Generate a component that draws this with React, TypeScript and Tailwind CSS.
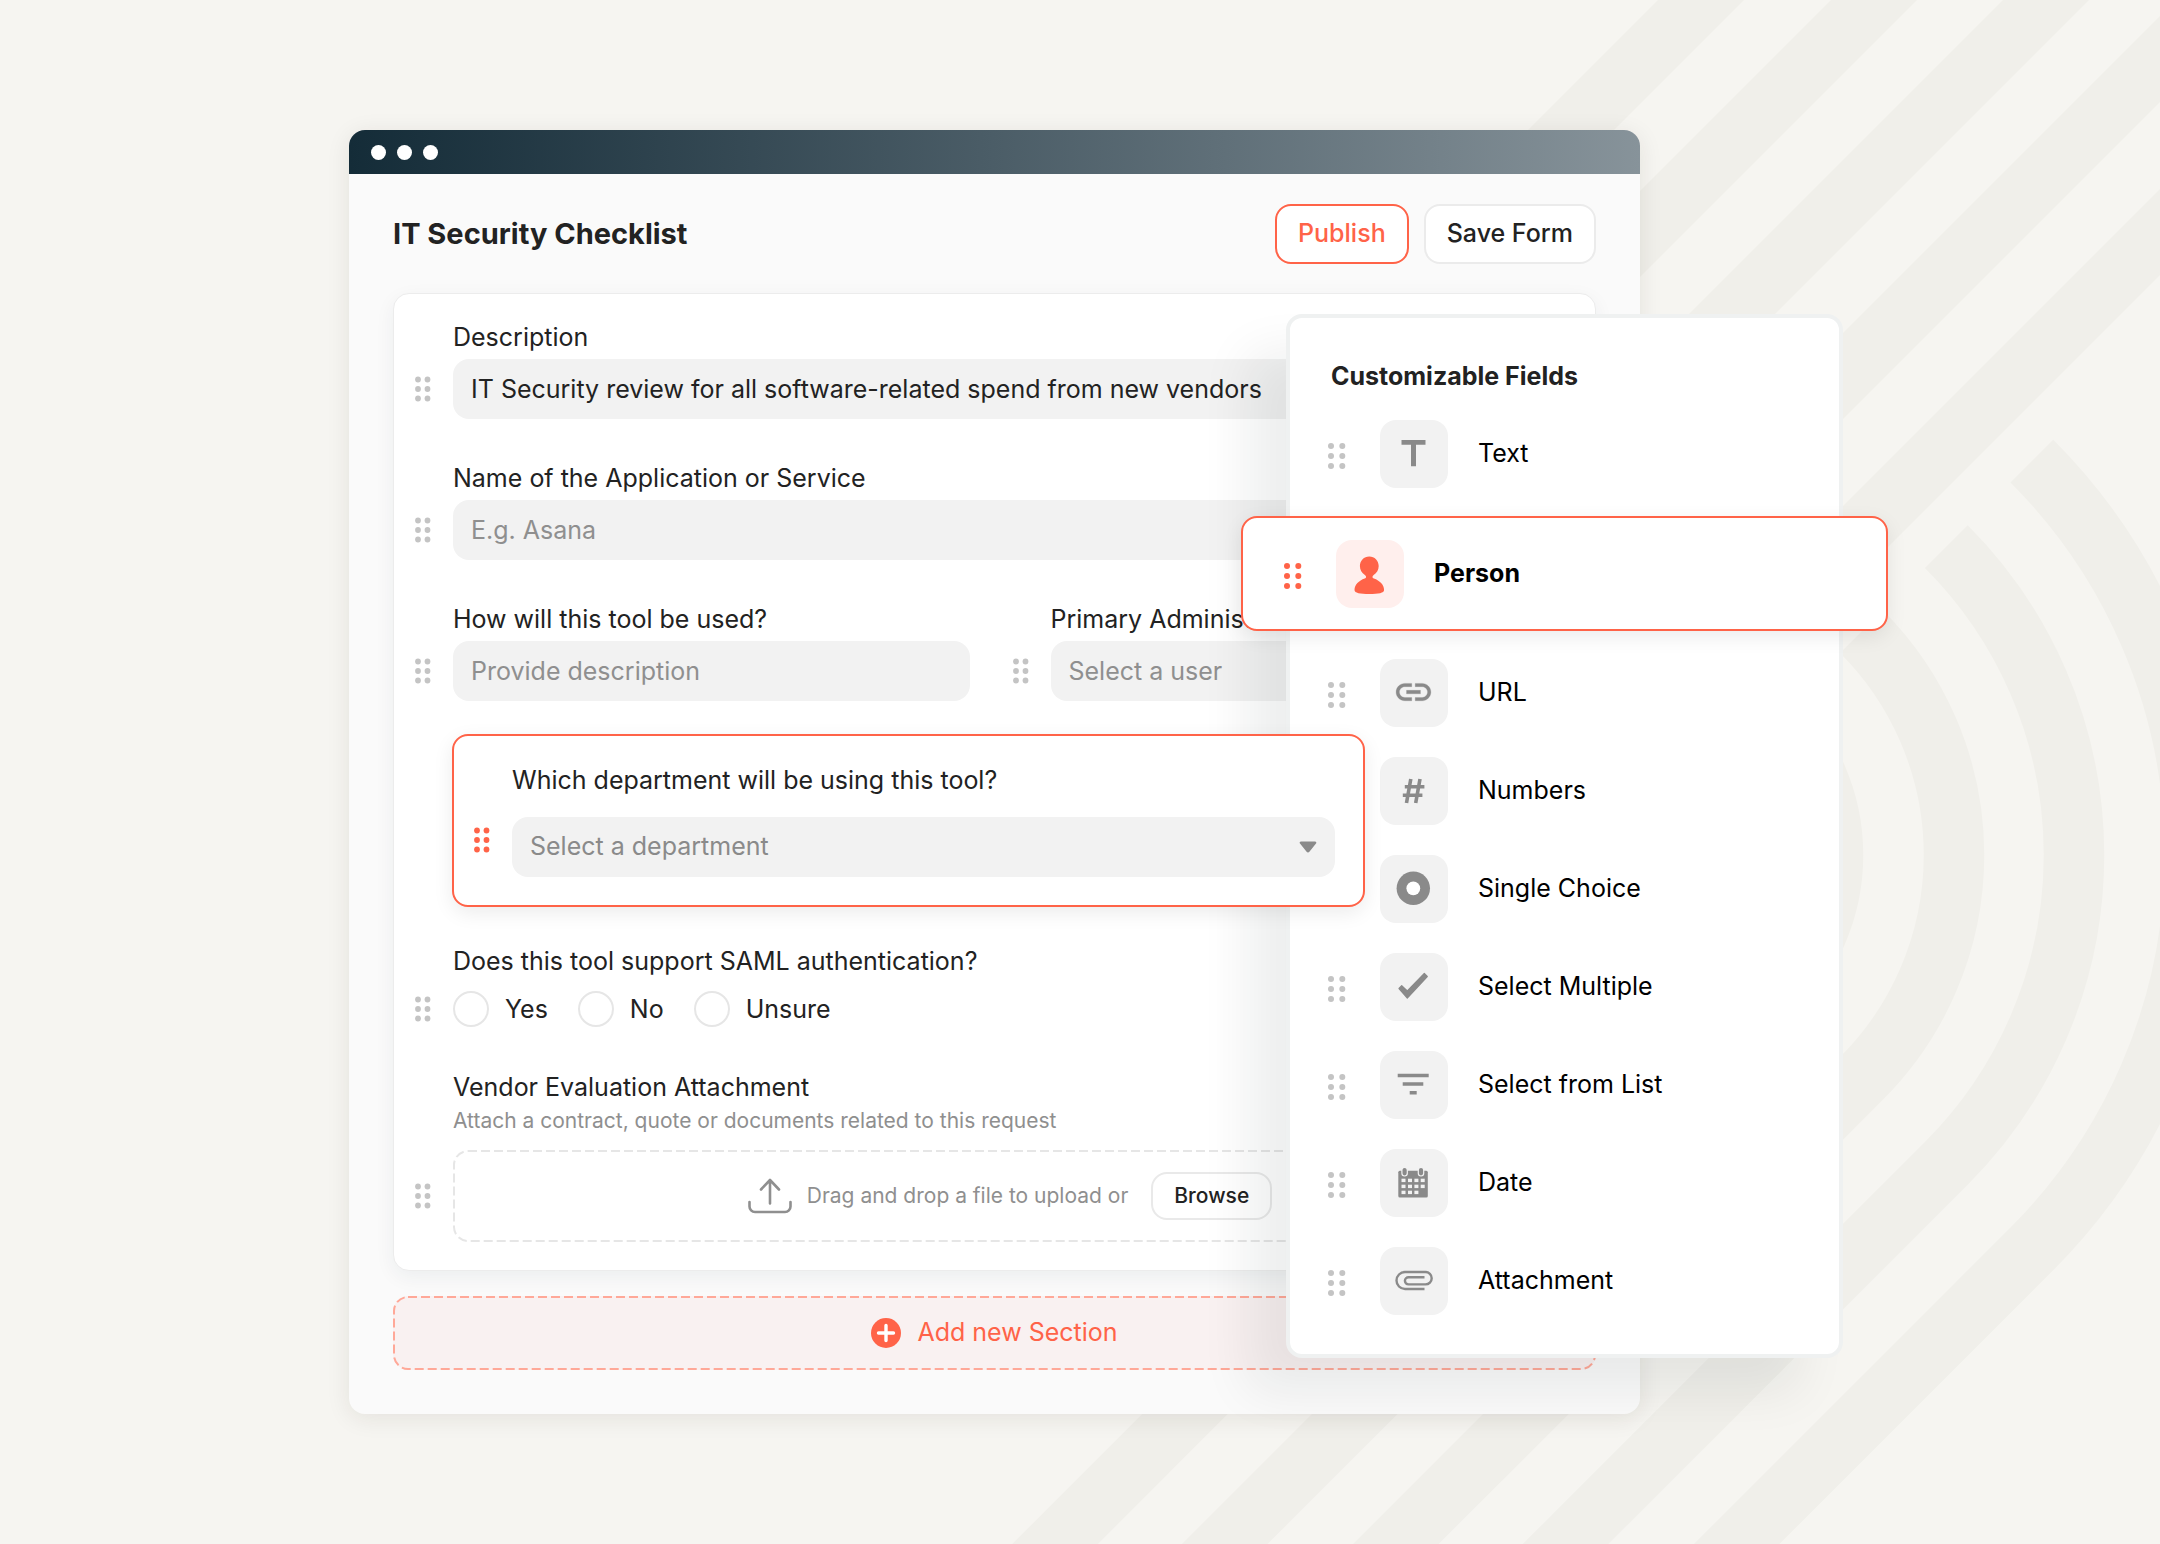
import type { ReactNode } from "react";

const CORAL = "#ff6348";

function Backdrop() {
  const diagonals = [1658, 1831, 2003, 2176, 2349];
  const rings = [75, 195, 316, 436, 557];
  const cx = 1638;
  const cy = 855;
  return (
    <svg
      aria-hidden="true"
      viewBox="0 0 2160 1544"
      preserveAspectRatio="xMaxYMin slice"
      className="absolute inset-0 h-full w-full"
    >
      {diagonals.map((s) => (
        <path key={s} fill="#f0efea" d={`M${s} 0H${s + 86}L1300 ${s + 86 - 1300}V${s - 1300}Z`} />
      ))}
      {rings.map((r) => {
        const d = r * Math.SQRT1_2;
        return (
          <path
            key={r}
            fill="none"
            stroke="#f0efea"
            strokeWidth="60.500"
            d={`M${cx + d} ${cy - d}A${r} ${r} 0 0 1 ${cx + d} ${cy + d}l-900 900`}
          />
        );
      })}
    </svg>
  );
}

function FormHandle({ active = false }: { active?: boolean }) {
  return (
    <svg aria-hidden="true" width="16" height="26" viewBox="0 0 16 26" fill={active ? CORAL : "#c4c4c4"} className="shrink-0">
      {[3.5, 13, 22.5].map((y) => (
        <g key={y}>
          <circle cx="3" cy={y} r="2.9" />
          <circle cx="12.5" cy={y} r="2.9" />
        </g>
      ))}
    </svg>
  );
}

function PanelHandle({ active = false }: { active?: boolean }) {
  return (
    <svg aria-hidden="true" width="18" height="30" viewBox="0 0 18 30" fill={active ? CORAL : "#c4c4c4"} className="shrink-0">
      {[7, 17, 27].map((y) => (
        <g key={y}>
          <circle cx="3" cy={y} r="3" />
          <circle cx="14.3" cy={y} r="3" />
        </g>
      ))}
    </svg>
  );
}

function DashedFrame({ color }: { color: string }) {
  return (
    <svg aria-hidden="true" className="pointer-events-none absolute inset-px h-[calc(100%-2px)] w-[calc(100%-2px)] overflow-visible">
      <rect width="100%" height="100%" rx="14" fill="none" stroke={color} strokeWidth="2" strokeDasharray="9 4" />
    </svg>
  );
}

function Caret() {
  return (
    <svg
      aria-hidden="true"
      width="18"
      height="12"
      viewBox="0 0 18 12"
      className="pointer-events-none absolute top-1/2 right-[18px] -translate-y-1/2"
    >
      <path d="M2 .5h14c1.2 0 1.8 1.2 1 2.1l-6.6 8.2c-.7.9-2.1.9-2.8 0L1 2.600C.2 1.700.8.500 2 .5z" fill="#8a8a8a" />
    </svg>
  );
}

const controlClass =
  "h-[60px] w-full appearance-none rounded-2xl bg-[#f2f2f2] px-[18px] text-[25px] text-[#222222] placeholder:text-[#8f8f8f] placeholder:opacity-100";

function Field({ id, label, children }: { id: string; label: string; children: ReactNode }) {
  return (
    <div className="flex min-w-0 items-end gap-[22px]">
      <div className="flex h-[60px] items-center">
        <FormHandle />
      </div>
      <div className="min-w-0 flex-1">
        <label htmlFor={id} className="mb-1 block text-[25px] leading-9 whitespace-nowrap">
          {label}
        </label>
        {children}
      </div>
    </div>
  );
}

function Tile({ active = false, children }: { active?: boolean; children: ReactNode }) {
  return (
    <svg
      aria-hidden="true"
      width="68"
      height="68"
      viewBox="0 0 68 68"
      fill={active ? CORAL : "#8a8a8a"}
      className={active ? "shrink-0 rounded-2xl bg-[#ffefed]" : "shrink-0 rounded-2xl bg-[#f2f2f2]"}
    >
      {children}
    </svg>
  );
}

const cells = [29.7, 35.7, 41.7].flatMap((y, row) =>
  [21.5, 28, 34.4, 40.7].filter((_, col) => !(row === 2 && col === 3)).map((x) => ({ x, y })),
);

const fields: { name: string; icon: ReactNode }[] = [
  {
    name: "URL",
    icon: (
      <g transform="translate(12.600 12.200) scale(1.740)">
        <path
          d="M3.900 12c0-1.710 1.390-3.100 3.100-3.100h4V7H7c-2.760 0-5 2.240-5 5s2.240 5 5 5h4v-1.900H7c-1.710 0-3.100-1.390-3.100-3.100zM8 13h8v-2H8v2zm9-6h-4v1.900h4c1.710 0 3.100 1.390 3.100 3.100s-1.390 3.100-3.100 3.100h-4V17h4c2.760 0 5-2.240 5-5s-2.240-5-5-5z"
          stroke="#8a8a8a"
          strokeWidth=".15"
        />
      </g>
    ),
  },
  {
    name: "Numbers",
    icon: <path fill="none" stroke="#8a8a8a" strokeWidth="3.600" d="M30.800 22l-4.300 24M40 22l-4.300 24M24.800 29.700h19.600M22.800 38.200h19.600" />,
  },
  {
    name: "Single Choice",
    icon: (
      <>
        <circle cx="33.300" cy="33.300" r="16.700" />
        <circle cx="33.300" cy="33.300" r="6.900" fill="#fff" />
      </>
    ),
  },
  {
    name: "Select Multiple",
    icon: (
      <path
        d="M19 35.500l2.700-2.800L27.300 38 44.300 20.500l3 3L27.300 45z"
        stroke="#8a8a8a"
        strokeWidth="1.200"
        strokeLinejoin="round"
      />
    ),
  },
  {
    name: "Select from List",
    icon: <path d="M17.700 22.700h31v3.600h-31zM22.700 31.300h20.600v3.400H22.700zM29.700 40h7v3.400h-7z" />,
  },
  {
    name: "Date",
    icon: (
      <>
        <rect x="18.300" y="21.700" width="29.500" height="26.800" rx="1.500" />
        {[24.6, 41].map((x) => (
          <rect key={x} x={x - 2.7} y="18.400" width="5.400" height="8.600" rx="2.700" stroke="#f2f2f2" strokeWidth="1.200" />
        ))}
        {cells.map(({ x, y }) => (
          <rect key={`${x}-${y}`} x={x} y={y} width="4" height="3.400" fill="#f2f2f2" />
        ))}
      </>
    ),
  },
  {
    name: "Attachment",
    icon: (
      <path
        fill="none"
        stroke="#8a8a8a"
        strokeWidth="2.400"
        d="M44.500 42H25a8.500 8.500 0 0 1 0-17h20.500a6.200 6.200 0 0 1 0 12.400H28.500a3.600 3.600 0 0 1 0-7.200h16"
      />
    ),
  },
];

function FieldItem({ name, icon }: { name: string; icon: ReactNode }) {
  return (
    <li className="mb-[30px] flex items-center px-[38px] text-[25px] text-black last:mb-0">
      <PanelHandle />
      <span className="mr-[30px] ml-[34px]">
        <Tile>{icon}</Tile>
      </span>
      {name}
    </li>
  );
}

export default function App() {
  return (
    <div className="relative min-h-screen overflow-hidden bg-[#f6f5f1] pt-[130px] pr-[272px] pb-[130px] pl-[349px] font-['Inter','Liberation_Sans',sans-serif] text-[#222222]">
      <Backdrop />
      <div className="relative">
        <main className="mr-[248px] rounded-2xl bg-[#fafafa] shadow-[0_4px_24px_rgba(40,35,20,0.09)]">
          <div className="flex h-11 items-center gap-[11px] rounded-t-2xl bg-linear-to-r from-[#142c38] to-[#87939a] pl-[22px]">
            <span className="size-[15px] rounded-full bg-white" />
            <span className="size-[15px] rounded-full bg-white" />
            <span className="size-[15px] rounded-full bg-white" />
          </div>

          <div className="px-11 pt-[30px] pb-11">
            <header className="flex items-center gap-[15px]">
              <h1 className="mr-auto text-[29px] font-bold">IT Security Checklist</h1>
              <button type="button" className="h-[60px] rounded-2xl border-2 border-[#ff6348] bg-white px-[21px] text-[25px] font-medium text-[#ff6348]">
                Publish
              </button>
              <button type="button" className="h-[60px] rounded-2xl border-2 border-[#ebebeb] bg-white px-[21px] text-[25px] font-medium">
                Save Form
              </button>
            </header>

            <form className="mt-[29px] rounded-2xl border border-[#ececec] bg-white pt-[25px] pr-7 pb-7 pl-[21px] shadow-[0_6px_20px_rgba(20,50,60,0.06)]">
              <div className="flex flex-col gap-[41px]">
                <Field id="description" label="Description">
                  <input
                    id="description"
                    type="text"
                    defaultValue="IT Security review for all software-related spend from new vendors"
                    className={controlClass}
                  />
                </Field>
                <Field id="app-name" label="Name of the Application or Service">
                  <input id="app-name" type="text" placeholder="E.g. Asana" className={controlClass} />
                </Field>
                <div className="grid grid-cols-2 gap-[43px]">
                  <Field id="usage" label="How will this tool be used?">
                    <input id="usage" type="text" placeholder="Provide description" className={controlClass} />
                  </Field>
                  <Field id="admin" label="Primary Administrator">
                    <input id="admin" type="text" placeholder="Select a user" className={controlClass} />
                  </Field>
                </div>
              </div>

              <div className="relative z-20 mt-[33px] ml-[37px] w-[913px] rounded-2xl border-2 border-[#ff6348] bg-white pt-[26px] pr-7 pb-7 pl-5 shadow-[0_6px_20px_rgba(0,0,0,0.08)]">
                <label htmlFor="department" className="ml-[38px] block text-[25px] leading-9">
                  Which department will be using this tool?
                </label>
                <div className="mt-[19px] flex items-center gap-[22px]">
                  <div className="flex h-[60px] items-start pt-[10px]">
                    <FormHandle active />
                  </div>
                  <div className="relative flex-1">
                    <select
                      id="department"
                      className="h-[60px] w-full appearance-none rounded-2xl bg-[#f2f2f2] px-[18px] text-[25px] text-[#8a8a8a]"
                    >
                      <option>Select a department</option>
                    </select>
                    <Caret />
                  </div>
                </div>
              </div>

              <fieldset className="mt-9">
                <legend className="ml-[38px] text-[25px] leading-9">Does this tool support SAML authentication?</legend>
                <div className="mt-3 flex items-center">
                  <FormHandle />
                  <div className="ml-[22px] flex gap-[30px] text-[25px] leading-9">
                    {["Yes", "No", "Unsure"].map((answer) => (
                      <label key={answer} className="flex items-center gap-4">
                        <input
                          type="radio"
                          name="saml"
                          className="size-9 appearance-none rounded-full border-2 border-[#e6e6e6] bg-white"
                        />
                        {answer}
                      </label>
                    ))}
                  </div>
                </div>
              </fieldset>

              <div className="mt-[42px] ml-[38px]">
                <h2 className="text-[25px] leading-9">Vendor Evaluation Attachment</h2>
                <p className="mt-0.5 text-[21px] leading-7 text-[#8f8f8f]">
                  Attach a contract, quote or documents related to this request
                </p>
              </div>
              <div className="mt-[15px] flex items-center gap-[22px]">
                <FormHandle />
                <div className="relative flex h-[92px] flex-1 items-center justify-center">
                  <DashedFrame color="#e6e6e6" />
                  <svg
                    aria-hidden="true"
                    width="44"
                    height="36"
                    viewBox="0 0 44 36"
                    fill="none"
                    stroke="#8f8f8f"
                    strokeWidth="2.600"
                    strokeLinecap="round"
                    strokeLinejoin="round"
                  >
                    <path d="M1.500 24v4.500a5.500 5.500 0 0 0 5.500 5.500h30a5.500 5.500 0 0 0 5.500-5.500V24M22 25.500V2M13 11.500L22 2l9 9.500" />
                  </svg>
                  <span className="mr-[23px] ml-[15px] text-[21px] text-[#8f8f8f]">Drag and drop a file to upload or</span>
                  <button type="button" className="h-12 rounded-2xl border-2 border-[#e9e9e9] bg-white px-[21px] text-[21px] font-medium">
                    Browse
                  </button>
                </div>
              </div>
            </form>

            <button
              type="button"
              className="relative mt-[25px] flex h-[74px] w-full items-center justify-center gap-4 rounded-2xl bg-[#f9f1f1] text-[25px] text-[#ff6348]"
            >
              <DashedFrame color="#ffa898" />
              <svg aria-hidden="true" width="30" height="30" viewBox="0 0 30 30">
                <circle cx="15" cy="15" r="15" fill={CORAL} />
                <path d="M15 7.500v15M7.500 15h15" stroke="#fff" strokeWidth="3.400" strokeLinecap="round" />
              </svg>
              Add new Section
            </button>
          </div>
        </main>

        <aside className="absolute top-[184px] right-[45px] z-10 w-[557px] rounded-2xl border-4 border-[#eff1f1] bg-white pt-10 pb-[39px] shadow-[-41px_36px_50px_-2px_rgba(20,30,30,0.07)]">
          <h2 className="mb-[26px] pl-[41px] text-[25px] leading-9 font-bold">Customizable Fields</h2>
          <ul>
            <li className="flex items-center px-[38px] text-[25px] text-black">
              <PanelHandle />
              <span className="mr-[30px] ml-[34px]">
                <Tile>
                  <path d="M21.500 20h24v4.700H36v21.500h-5V24.700h-9.500z" />
                </Tile>
              </span>
              Text
            </li>
            <li className="-mx-[49px] mt-7 mb-7 flex h-[115px] items-center rounded-2xl border-2 border-[#ff6348] bg-white px-[41px] text-[25px] font-bold text-black shadow-[0_6px_20px_rgba(0,0,0,0.08)]">
              <PanelHandle active />
              <span className="mr-[30px] ml-[34px]">
                <Tile active>
                  <path d="M33.300 16.500c5.300 0 9.400 4.200 9.400 9.600 0 4-1.900 7.100-5 8.900-1.700 1-1.600 2.900.2 3.600 5.800 1.900 10.200 6.400 10.200 11.400 0 3-5.600 4-14.800 4s-14.800-1-14.800-4c0-5 4.400-9.500 10.200-11.400 1.800-.7 1.900-2.600.2-3.600-3.100-1.800-5-4.900-5-8.900 0-5.400 4.100-9.600 9.400-9.600z" />
                </Tile>
              </span>
              Person
            </li>
            {fields.map((field) => (
              <FieldItem key={field.name} {...field} />
            ))}
          </ul>
        </aside>
      </div>
    </div>
  );
}
